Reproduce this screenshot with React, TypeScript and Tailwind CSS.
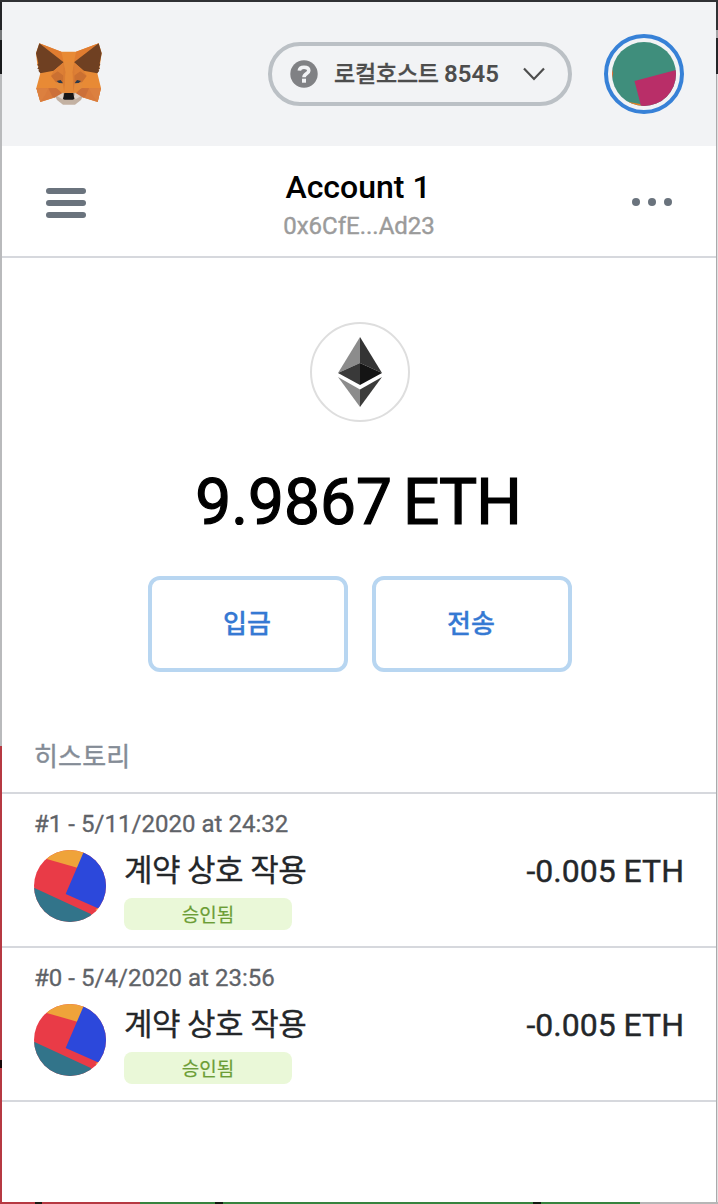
import React from 'react';

function Fox() {
  return (
    <svg viewBox="48 39 198 186" className="h-[62px] w-[66px]" aria-hidden="true">
      <path d="M58 40 L124 65 L168 65 L236 40 L245 70 L239 110 L232 130 L243 174 L233 216 L183 200 L165 208 L129 208 L111 200 L61 216 L49 174 L61 130 L52 104 L48 70Z" fill="#e88a35" />
      <path d="M105 197 L127 188 L167 188 L189 197 L183 210 L165 224 L129 224 L111 210Z" fill="#c3b1a2" />
      <path d="M107 196 L127 189 L132 200 L127 208Z M187 196 L167 189 L162 200 L167 208Z" fill="#e0d3c8" />
      <path d="M58 40 L124 65 L131 97Z M236 40 L168 65 L162 97Z" fill="#e07c30" />
      <path d="M58 40 L131 97 L101 122 L61 130 L55 122 L58 119 L52 116 L56 110 L52 104 L55 100 L48 70Z M236 40 L162 97 L191 122 L232 130 L238 122 L235 119 L240 116 L237 110 L241 104 L239 100 L245 70Z" fill="#6f4022" />
      <path d="M131 97 L101 122 L93 137 L132 138 L137 127Z M162 97 L191 122 L200 137 L161 138 L157 127Z" fill="#dd7f35" />
      <path d="M93 138 L113 124 L132 138 L133 158 L111 161Z M200 138 L181 124 L161 138 L160 158 L183 161Z" fill="#cb7031" />
      <path d="M49 174 L109 174 L99 204 L61 216Z M243 174 L184 174 L194 204 L233 216Z" fill="#d97b3c" />
      <path d="M85 175 L111 174 L126 190 L103 203 L98 202Z M207 175 L183 174 L168 190 L190 203 L195 202Z" fill="#cc7039" />
      <path d="M85 175 L49 174 L61 216 L76 194Z M207 175 L243 174 L233 216 L217 194Z" fill="#dc803f" />
      <path d="M105 157 L132 160 L130 188 L108 174Z M189 157 L161 160 L163 188 L186 174Z" fill="#e48b3a" />
      <path d="M131 97 L137 127 L133 190 L129 160Z M162 97 L157 127 L160 190 L164 160Z" fill="#d97c34" />
      <path d="M131 97 L137 127 L133 190 L160 190 L157 127 L162 97Z" fill="#e58a38" />
      <path d="M110 153 L122 150 L129 160 L117 159Z M183 153 L171 150 L164 160 L176 159Z" fill="#2b3a4b" />
      <path d="M133 189 L160 189 L163 207 L158 209 L134 209 L129 207Z" fill="#171717" />
    </svg>
  );
}

function ContractIcon() {
  return (
    <svg viewBox="0 0 216 216" className="h-[72px] w-[72px] shrink-0 rounded-full" aria-hidden="true">
      <rect width="216" height="216" fill="#e93b47" />
      <path d="M0 0 H160 L130 53 L38 27 L0 16Z" fill="#efa33a" />
      <path d="M148 8 L170 0 H216 V216 L190 174 L95 132Z" fill="#2c48db" />
      <path d="M0 113 L172 193 L170 216 H0Z" fill="#32748a" />
      <path d="M172 193 L190 174 L205 174 L190 205Z" fill="#e93b47" />
      <path d="M185 178 L192 174 L192 182 L186 184Z" fill="#efa33a" />
    </svg>
  );
}

function Transaction({ nonce, date }: { nonce: number; date: string }) {
  return (
    <li className="h-[154px] border-b-2 border-[#d6d8dd] px-8 pt-[14px]">
      <div className="h-[34px] text-[24px] leading-[32px] tracking-[0.03px] text-[#5f6368] [-webkit-text-stroke:0.3px]">
        #{nonce} - {date}
      </div>
      <div className="flex pt-2">
        <ContractIcon />
        <div className="ml-[18px] flex-1">
          <h2 className="h-12 whitespace-nowrap text-[31px] leading-[42px] tracking-[-0.55px] text-[#24272a] [-webkit-text-stroke:0.3px]">계약 상호 작용</h2>
          <div className="flex h-8 w-[168px] items-center justify-center rounded-lg bg-[#eaf8d8] pt-[2px] text-[19px] leading-none text-[#6c9d35] [-webkit-text-stroke:0.2px]">승인됨</div>
        </div>
        <div className="-mt-[1px] whitespace-nowrap text-[32px] leading-[44px] text-[#24272a] [-webkit-text-stroke:0.4px]">-0.005 ETH</div>
      </div>
    </li>
  );
}

export default function App() {
  return (
    <div className="flex h-[1204px] w-[718px] flex-col overflow-hidden bg-white font-['Roboto','Noto_Sans_CJK_KR',sans-serif]">
      <div className="h-[2px] shrink-0 bg-[#303134]" />
      <div className="flex min-h-0 flex-1">
        <div className="flex w-[2px] shrink-0 flex-col">
          <div className="h-7 bg-[#242528]" />
          <div className="h-[10px] bg-[#77797b]" />
          <div className="h-[34px] bg-[#191a1c]" />
          <div className="h-[672px] bg-[#b9babc]" />
          <div className="h-[314px] bg-[#b63942]" />
          <div className="h-2 bg-[#160809]" />
          <div className="flex-1 bg-[#b63942]" />
        </div>
        <main className="min-w-0 flex-1">
          <header className="flex h-36 items-center bg-[#f2f3f5] pr-8 pl-[34px]">
            <Fox />
            <button className="ml-[166px] flex h-16 w-[304px] items-center rounded-full border-4 border-[#bbc0c5] pl-[18px]">
              <svg viewBox="0 0 28 28" className="h-7 w-7 shrink-0" aria-hidden="true">
                <circle cx="14" cy="14" r="13.7" fill="#808184" />
                <path d="M9.3 10.7 C9.5 8.2 11.6 7.2 14 7.2 C17.1 7.2 18.8 8.6 18.8 10.8 C18.8 13.7 14 13.3 14 17.3" fill="none" stroke="#f2f3f5" strokeWidth="3.6" />
                <rect x="12" y="18.7" width="4" height="4" fill="#f2f3f5" />
              </svg>
              <span className="ml-4 flex w-[166px] items-baseline whitespace-nowrap text-left leading-8 font-medium text-[#4d4d4d]"><span className="w-[110px] text-[23px] tracking-[-0.2px] [-webkit-text-stroke:0.3px]">로컬호스트 </span><span className="text-[24px] font-semibold">8545</span></span>
              <svg viewBox="0 0 22 14" className="ml-[23px] h-[14px] w-[22px]" fill="none" stroke="#4d4d4d" strokeWidth="2.2" aria-hidden="true">
                <path d="M1 1.5 L11 12 L21 1.5" />
              </svg>
            </button>
            <button className="ml-8 flex h-20 w-20 items-center justify-center rounded-full border-4 border-[#3781d7]">
              <svg viewBox="0 0 64 64" className="h-16 w-16 rounded-full" aria-hidden="true">
                <rect width="64" height="64" fill="#3f8e7c" />
                <path d="M22.5 39 L64 28 V64 H29Z" fill="#b92e68" />
                <path d="M17 60 L28 62 L29 64 H17Z" fill="#e58121" />
                <path d="M0 27 L1.2 31 L0 37Z" fill="#e96c31" />
              </svg>
            </button>
          </header>

          <section className="flex h-28 items-start border-b-2 border-[#d6d8dd] px-11">
            <div className="mt-[42px] flex w-10 flex-col gap-[6px]">
              <i className="h-[6px] rounded-full bg-[#6a737d]" />
              <i className="h-[6px] rounded-full bg-[#6a737d]" />
              <i className="h-[6px] rounded-full bg-[#6a737d]" />
            </div>
            <div className="flex-1 pt-5 text-center">
              <h1 className="pr-[2px] text-[32px] leading-[42px] font-medium text-black">Account 1</h1>
              <div className="text-[24px] leading-[36px] text-[#9b9b9b] [-webkit-text-stroke:0.4px]">0x6CfE...Ad23</div>
            </div>
            <div className="mt-[52px] flex w-10 justify-between">
              <i className="h-2 w-2 rounded-full bg-[#6a737d]" />
              <i className="h-2 w-2 rounded-full bg-[#6a737d]" />
              <i className="h-2 w-2 rounded-full bg-[#6a737d]" />
            </div>
          </section>

          <section className="flex h-[472px] flex-col items-center pt-16 pl-[2px]">
            <div className="flex h-[100px] w-[100px] shrink-0 items-center justify-center rounded-full border-2 border-[#dedede]">
              <svg viewBox="0 0 44 70" className="h-[70px] w-11" aria-hidden="true">
                <path d="M22 0 L0 36 L22 26Z" fill="#8c8c8c" />
                <path d="M22 0 L44 36 L22 26Z" fill="#343434" />
                <path d="M0 36 L22 26 V48Z" fill="#393939" />
                <path d="M44 36 L22 26 V48Z" fill="#141414" />
                <path d="M0 40 L22 52.5 V70Z" fill="#8c8c8c" />
                <path d="M44 40 L22 52.5 V70Z" fill="#3c3c3b" />
              </svg>
            </div>
            <div className="mt-[38px] flex h-[86px] shrink-0 items-center gap-[11px] whitespace-nowrap pr-1 text-[64px] leading-[86px] text-black [-webkit-text-stroke:1.2px]">
              <span>9.9867</span><span className="tracking-[-1px]">ETH</span>
            </div>
            <div className="mt-[30px] flex gap-6">
              <button className="h-24 w-[200px] rounded-xl border-4 border-[#b8d6f1] pt-[1px] pr-[2px] text-[26px] font-medium text-[#3579d3] [-webkit-text-stroke:0.3px]">입금</button>
              <button className="h-24 w-[200px] rounded-xl border-4 border-[#b8d6f1] pt-[1px] pr-[2px] text-[26px] font-medium text-[#3579d3] [-webkit-text-stroke:0.3px]">전송</button>
            </div>
          </section>

          <section>
            <h3 className="h-16 border-b-2 border-[#d6d8dd] pt-[8px] pl-8 text-[26px] leading-[38px] tracking-[0.2px] text-[#848c96] [-webkit-text-stroke:0.4px]">히스토리</h3>
            <ul>
              <Transaction nonce={1} date="5/11/2020 at 24:32" />
              <Transaction nonce={0} date="5/4/2020 at 23:56" />
            </ul>
          </section>
        </main>
        <div className="flex w-[2px] shrink-0 flex-col">
          <div className="h-7 bg-[#303134]" />
          <div className="h-2 bg-[#a4a5a7]" />
          <div className="h-9 bg-[#242528]" />
          <div className="flex-1 border-l border-[#aaaaac] bg-[#e1e1e1]" />
        </div>
      </div>
      <div className="flex h-[2px] shrink-0">
        <div className="w-[35px] bg-[#b63942]" />
        <div className="w-[7px] bg-[#1e1a12]" />
        <div className="w-[98px] bg-[#b63942]" />
        <div className="w-[75px] bg-[#36833e]" />
        <div className="w-[8px] bg-[#111b11]" />
        <div className="w-[310px] bg-[#36833e]" />
        <div className="w-[8px] bg-[#111b11]" />
        <div className="w-[99px] bg-[#36833e]" />
        <div className="flex-1 bg-[#b6b6b6]" />
      </div>
    </div>
  );
}
